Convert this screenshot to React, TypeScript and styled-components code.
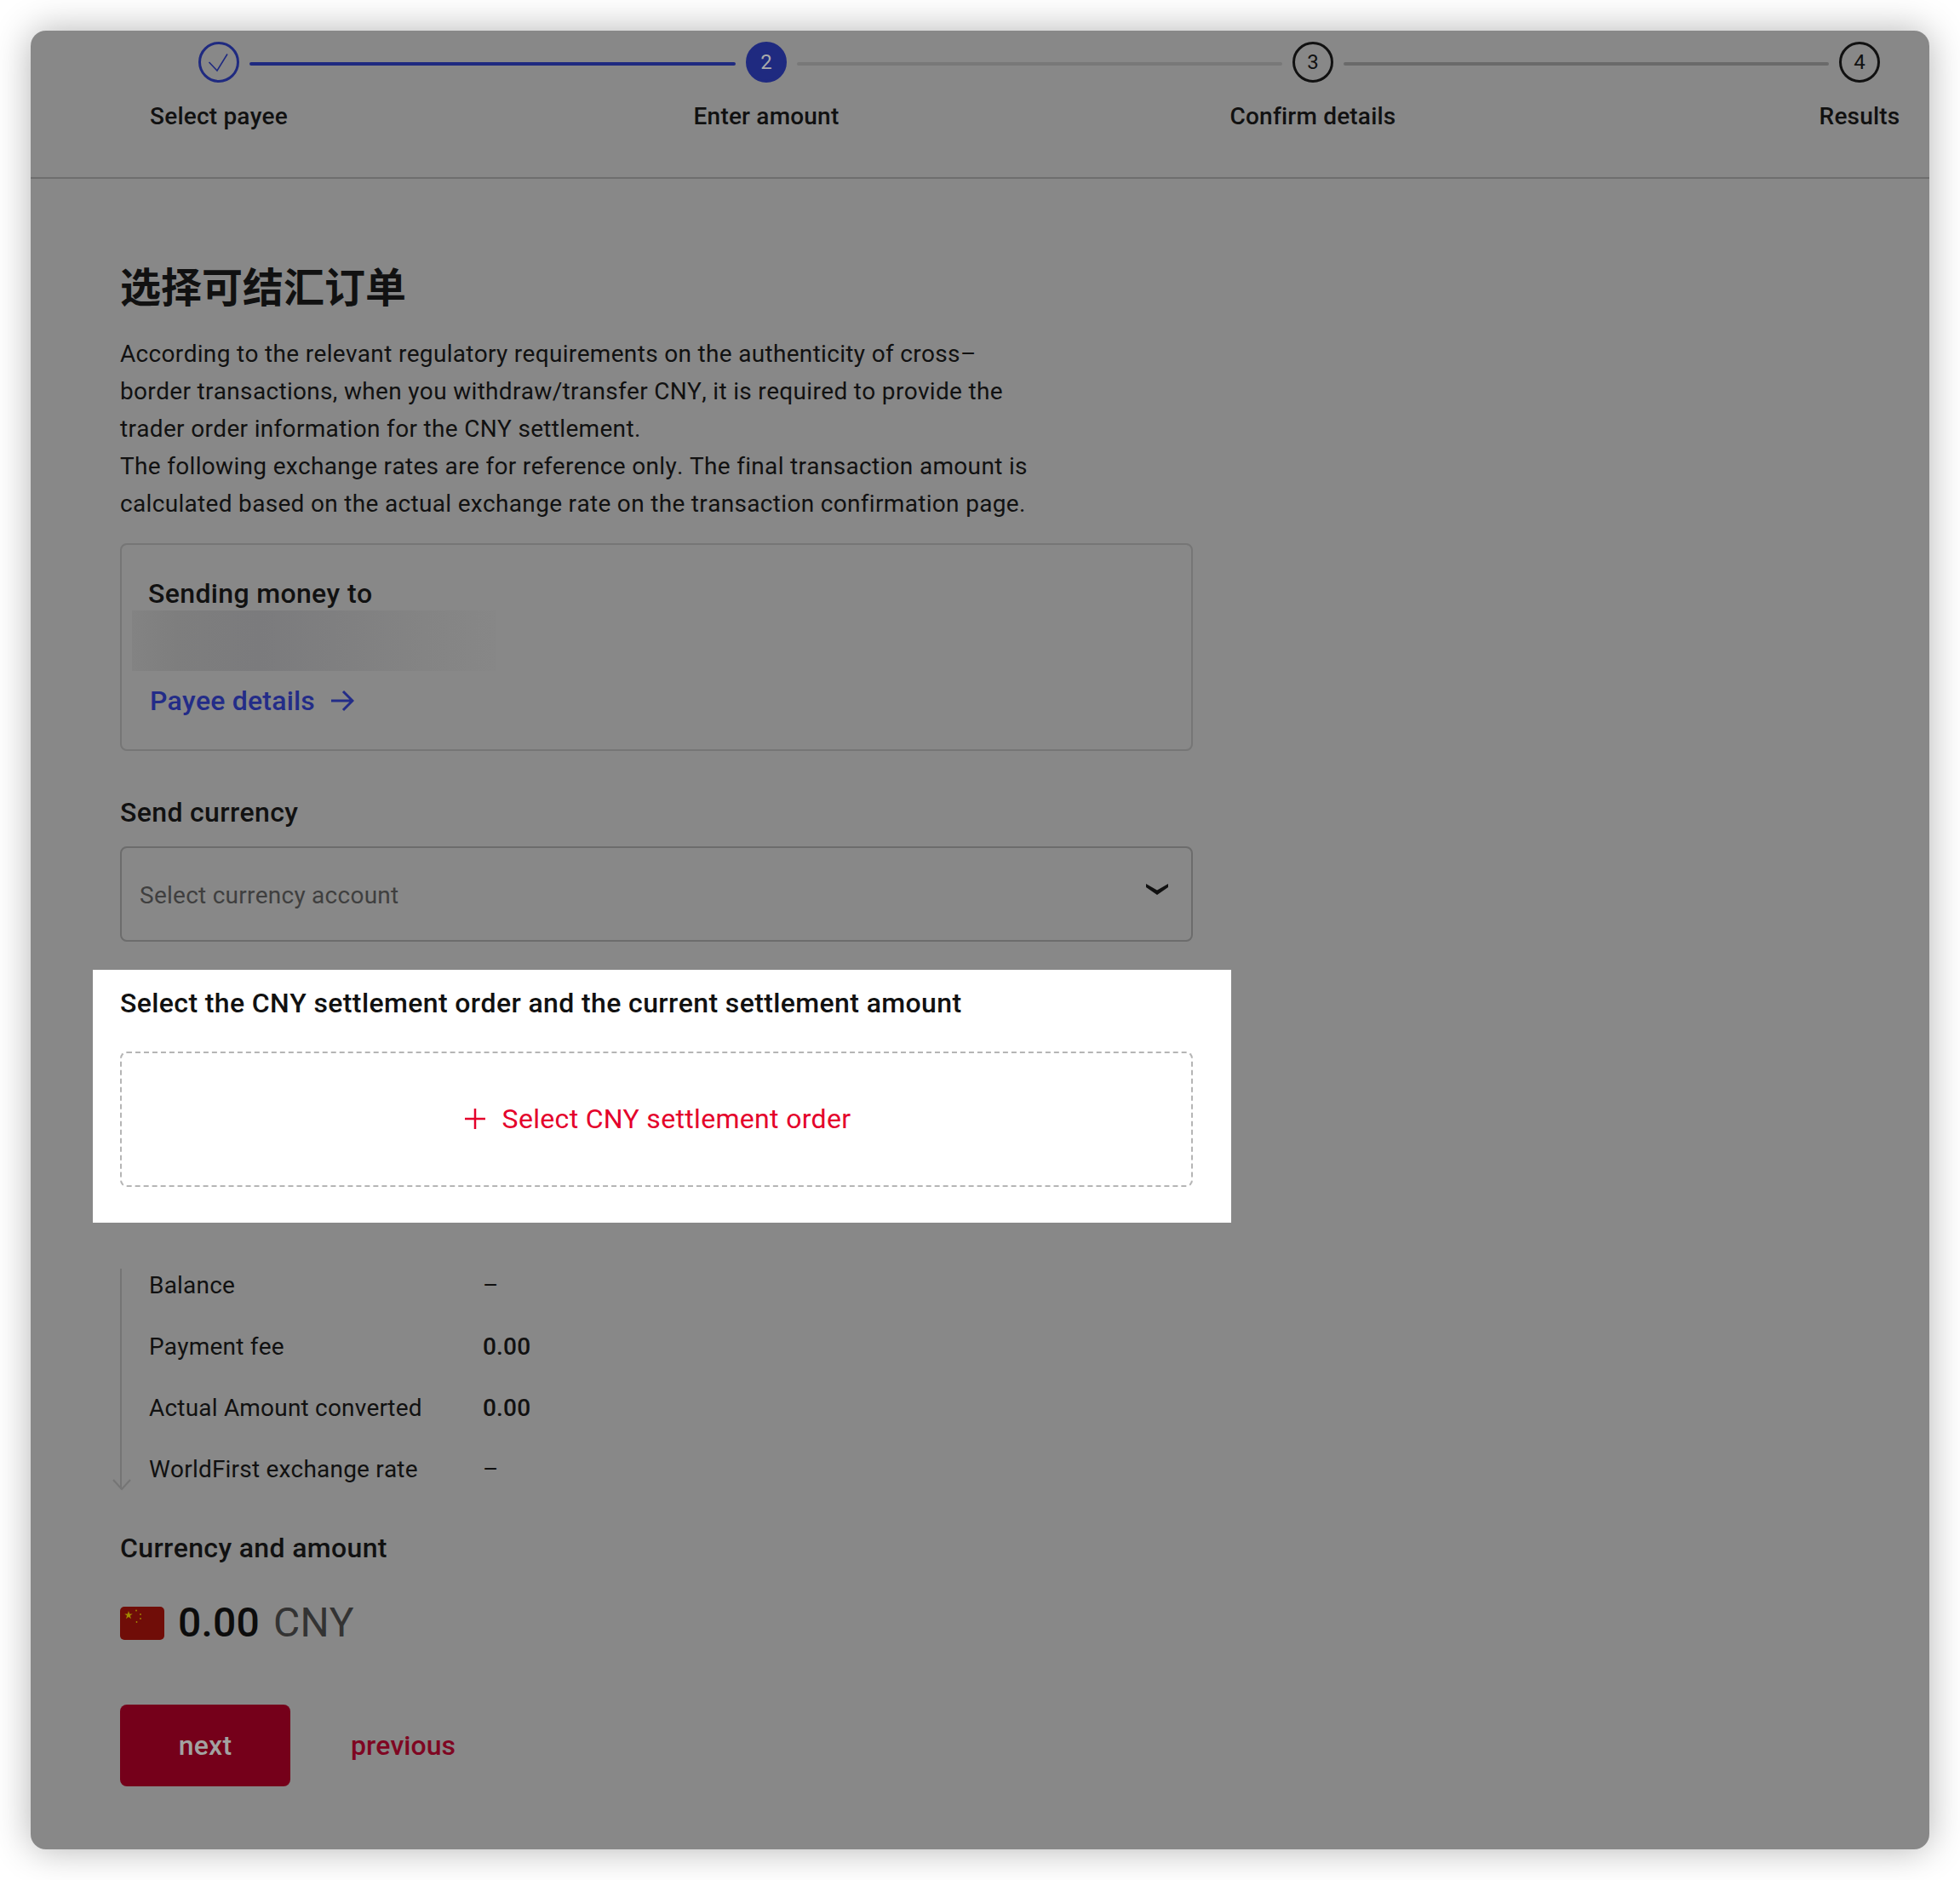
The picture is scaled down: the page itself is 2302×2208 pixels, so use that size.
import React from "react";
import styled, { createGlobalStyle } from "styled-components";

const Global = createGlobalStyle`
  html, body { margin: 0; padding: 0; background: #fff; }
  body { font-family: Roboto, "Noto Sans CJK SC", sans-serif; color: #111; font-kerning: none; letter-spacing: .2px; }
  * { box-sizing: border-box; }
`;
const Page = styled.div`
  width: 2302px; height: 2208px; padding: 36px; overflow: hidden;
`;
const Card = styled.main`
  width: 2230px; height: 2136px; background: #888; border-radius: 18px;
  box-shadow: 0 0 44px rgba(0,0,0,.3);
`;
const Stepper = styled.header`
  height: 174px; padding: 13px 0 0 197px; display: flex; border-bottom: 2px solid #6e6e6e;
`;
const Step = styled.div<{ $width: number }>`
  width: ${p => p.$width}px;
  flex: none;
`;
const Track = styled.div`
  display: flex; align-items: center; height: 48px;
`;
const Circle = styled.div<{ $state: "done" | "active" | "todo" }>`
  width: 48px; height: 48px; border-radius: 50%; flex: none;
  display: flex; align-items: center; justify-content: center;
  font-size: 24px; line-height: 1;
  border: 3.5px solid ${p => (p.$state === "todo" ? "#111" : "#1f2a80")};
  background: ${p => (p.$state === "active" ? "#1f2a80" : "transparent")};
  color: ${p => (p.$state === "active" ? "#aaa" : "#111")};
`;
const Connector = styled.div<{ $color: string }>`
  flex: 1; height: 4px; margin: 4px 12px 0 12px; border-radius: 2px; background: ${p => p.$color};
`;
const StepLabel = styled.div`
  width: 48px; margin-top: 20px; display: flex; justify-content: center; white-space: nowrap;
  font-size: 28px; line-height: 40px; font-weight: 500; color: #111;
`;
const Content = styled.section`
  padding: 92px 0 0 105px; width: 1365px;
`;
const Title = styled.h1`
  margin: 0; font: 700 48px/64px "Noto Sans CJK SC", sans-serif; letter-spacing: 0; color: #111;
`;
const Intro = styled.p`
  margin: 28px 0 0; font-size: 28px; line-height: 44px; letter-spacing: .32px; color: #111; white-space: nowrap;
`;
const PayeeBox = styled.div`
  margin-top: 24px; height: 244px; padding: 37px 31px 0; border: 2px solid #767676; border-radius: 8px;
`;
const FieldTitle = styled.div`
  font-size: 32px; line-height: 40px; font-weight: 500; letter-spacing: .35px; color: #111;
`;
const Redacted = styled.div`
  margin-left: -19px; width: 428px; height: 71px;
  background: linear-gradient(90deg, #838383 0%, #7e7e7e 12%, #7b7b7d 35%, #7f7f80 55%, #848484 80%, #878787 100%);
`;
const PayeeLink = styled.a`
  margin: 15px 0 0 2px; display: flex; align-items: center; gap: 18px;
  font-size: 32px; line-height: 40px; font-weight: 500; color: #232c88;
`;
const SectionLabel = styled(FieldTitle)<{ $top: number }>`
  margin-top: ${p => p.$top}px;
`;
const SelectBox = styled.div`
  margin-top: 20px; height: 112px; padding: 0 27px 0 21px; border: 2px solid #6c6c6c; border-radius: 8px;
  display: flex; align-items: center; justify-content: space-between;
  font-size: 28px; letter-spacing: .25px; color: #3f3f3f;
`;
const Placeholder = styled.span`
  padding-top: 3px;
`;
const Chevron = styled.svg`
  margin-bottom: 12px;
`;
const Spotlight = styled.div`
  margin: 33px 0 0 -32px; width: 1337px; height: 297px; padding: 19px 45px 0 32px; background: #fff;
`;
const SpotTitle = styled.div`
  font-size: 32px; line-height: 40px; font-weight: 500; letter-spacing: .38px; color: #111; white-space: nowrap;
`;
const AddOrder = styled.button`
  margin-top: 37px; width: 100%; height: 159px; padding: 0 0 2px 2px; background: #fff; border: 2px dashed #b5b5b5; border-radius: 8px;
  display: flex; align-items: center; justify-content: center; gap: 19px;
  font-family: inherit; font-size: 32px; letter-spacing: .32px; color: #e4002b;
`;
const Breakdown = styled.div`
  position: relative; margin-top: 54px; height: 259px; padding-left: 32px; border-left: 2px solid #757575;
  display: flex; flex-direction: column; gap: 32px;
`;
const ArrowHead = styled.svg`
  position: absolute; left: -11px; bottom: -2px;
`;
const Row = styled.div`
  display: grid; grid-template-columns: 392px auto; font-size: 28px; line-height: 40px; color: #111;
`;
const Value = styled.span`
  font-weight: 500;
`;
const Amount = styled.div`
  margin-top: 38px; height: 60px; display: flex; align-items: center; gap: 16px;
`;
const Flag = styled.svg`
  border-radius: 5px; flex: none; margin-top: 1px;
`;
const Figure = styled.div`
  font-size: 48px; line-height: 60px; font-weight: 500; color: #0c0c0c;
`;
const Currency = styled.span`
  margin-left: 16px; font-weight: 400; color: #333;
`;
const Actions = styled.div`
  margin-top: 66px; display: flex; align-items: center; gap: 71px;
`;
const NextButton = styled.button`
  width: 200px; height: 96px; border: 0; border-radius: 8px; background: #75001a; color: #a2a2a2;
  font-family: inherit; font-size: 32px; font-weight: 500; letter-spacing: .2px;
`;
const PrevLink = styled.a`
  font-size: 32px; font-weight: 500; letter-spacing: 0; color: #7f0622;
`;

const steps = [
  { label: "Select payee", state: "done", line: "#1f2a80", width: 643 },
  { label: "Enter amount", state: "active", line: "#787878", width: 642 },
  { label: "Confirm details", state: "todo", line: "#6a6a6a", width: 642 },
  { label: "Results", state: "todo", line: "", width: 48 },
] as const;

const rows = [
  ["Balance", "–", false],
  ["Payment fee", "0.00", true],
  ["Actual Amount converted", "0.00", true],
  ["WorldFirst exchange rate", "–", false],
] as const;

export default function App() {
  return (
    <Page>
      <Global />
      <Card>
        <Stepper>
          {steps.map((s, i) => (
            <Step key={s.label} $width={s.width}>
              <Track>
                <Circle $state={s.state}>
                  {s.state === "done" ? (
                    <svg width="26" height="26" viewBox="0 0 26 26" fill="none" stroke="#1f2a80" strokeWidth="1.6">
                      <path d="M1.5 13l9.5 10L23 3.5" />
                    </svg>
                  ) : (
                    i + 1
                  )}
                </Circle>
                {s.line && <Connector $color={s.line} />}
              </Track>
              <StepLabel>{s.label}</StepLabel>
            </Step>
          ))}
        </Stepper>
        <Content>
          <Title>选择可结汇订单</Title>
          <Intro>
            According to the relevant regulatory requirements on the authenticity of cross–<br />
            border transactions, when you withdraw/transfer CNY, it is required to provide the<br />
            trader order information for the CNY settlement.<br />
            The following exchange rates are for reference only. The final transaction amount is<br />
            calculated based on the actual exchange rate on the transaction confirmation page.
          </Intro>
          <PayeeBox>
            <FieldTitle>Sending money to</FieldTitle>
            <Redacted />
            <PayeeLink>
              Payee details
              <svg width="28" height="26" viewBox="0 0 28 26" fill="none" stroke="#232c88" strokeWidth="3">
                <path d="M1 13h25M15 2l11 11-11 11" />
              </svg>
            </PayeeLink>
          </PayeeBox>
          <SectionLabel $top={52}>Send currency</SectionLabel>
          <SelectBox>
            <Placeholder>Select currency account</Placeholder>
            <Chevron width="26" height="14" viewBox="0 0 26 14" fill="#111">
              <path d="M0 1l13 7.5L26 1v4L13 14 0 5z" />
            </Chevron>
          </SelectBox>
          <Spotlight>
            <SpotTitle>Select the CNY settlement order and the current settlement amount</SpotTitle>
            <AddOrder>
              <svg width="26" height="26" viewBox="0 0 26 26" fill="none" stroke="#e4002b" strokeWidth="2.5">
                <path d="M13 1v24M1 13h24" />
              </svg>
              Select CNY settlement order
            </AddOrder>
          </Spotlight>
          <Breakdown>
            {rows.map(([label, value, strong]) => (
              <Row key={label}>
                <span>{label}</span>
                {strong ? <Value>{value}</Value> : <span>{value}</span>}
              </Row>
            ))}
            <ArrowHead width="22" height="14" viewBox="0 0 22 14" fill="none" stroke="#757575" strokeWidth="2">
              <path d="M1 1l10 11L21 1" />
            </ArrowHead>
          </Breakdown>
          <SectionLabel $top={49}>Currency and amount</SectionLabel>
          <Amount>
            <Flag width="52" height="39" viewBox="0 0 52 39">
              <rect width="52" height="39" fill="#700d08" />
              <path d="M10 5l1.2 3.4h3.6l-2.9 2.2 1.1 3.6-3-2.2-3 2.2 1.1-3.6-2.9-2.2h3.6z" fill="#a28a00" />
              <circle cx="19" cy="4.5" r=".9" fill="#a28a00" />
              <circle cx="24" cy="9" r=".9" fill="#a28a00" />
              <circle cx="24" cy="14" r=".9" fill="#a28a00" />
              <circle cx="19.5" cy="18" r=".9" fill="#a28a00" />
            </Flag>
            <Figure>
              0.00<Currency>CNY</Currency>
            </Figure>
          </Amount>
          <Actions>
            <NextButton>next</NextButton>
            <PrevLink>previous</PrevLink>
          </Actions>
        </Content>
      </Card>
    </Page>
  );
}
